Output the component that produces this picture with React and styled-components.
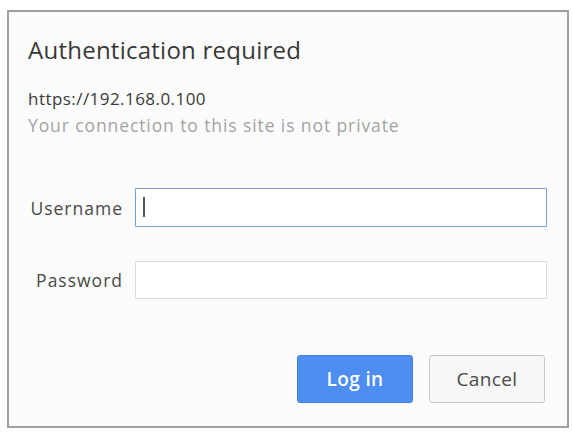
import React from "react";
import styled, { createGlobalStyle } from "styled-components";

const GlobalStyle = createGlobalStyle`
  html, body {
    margin: 0;
    padding: 0;
    background: #ffffff;
  }
  body {
    font-family: "Open Sans", "Noto Sans", Arial, sans-serif;
  }
`;

const Page = styled.div`
  padding: 10px 4px 6px 7px;
  width: 573px;
  height: 434px;
  box-sizing: border-box;
`;

const Dialog = styled.div`
  width: 562px;
  height: 418px;
  box-sizing: border-box;
  border: 2px solid #a0a0a0;
  background: #fcfcfc;
  padding: 24px 20px 23px 19px;
  display: flex;
  flex-direction: column;
`;

const Title = styled.h1`
  margin: 0;
  font-size: 24px;
  line-height: 28px;
  letter-spacing: 0.25px;
  font-weight: 400;
  color: #383838;
`;

const Origin = styled.div`
  margin-top: 25px;
  font-size: 17px;
  line-height: 20px;
  letter-spacing: 0.45px;
  color: #3a3a3a;
`;

const Notice = styled.div`
  margin-top: 5px;
  font-size: 17.5px;
  line-height: 22px;
  letter-spacing: 0.9px;
  color: #a3a3a3;
`;

const Form = styled.div`
  margin-top: 52px;
  display: grid;
  grid-template-columns: 94px 1fr;
  column-gap: 13px;
  row-gap: 34px;
  align-items: center;
`;

const Label = styled.label`
  text-align: right;
  font-size: 17.5px;
  letter-spacing: 1px;
  margin-right: -1px;
  color: #484848;
`;

const Field = styled.div`
  position: relative;
  height: ${(p) => (p.$focused ? 39 : 38)}px;
  box-sizing: border-box;
  border: 1px solid ${(p) => (p.$focused ? "#7d9fe0" : "#dcdcdc")};
  box-shadow: ${(p) => (p.$focused ? "0 0 1px #a8c0ee" : "none")};
  background: #fff;
  border-radius: 1px;
`;

const Caret = styled.span`
  position: absolute;
  left: 7px;
  top: 8px;
  width: 2px;
  height: 20px;
  background: #555;
`;

const Actions = styled.div`
  margin-top: 56px;
  display: flex;
  justify-content: flex-end;
  gap: 16px;
  padding-right: 2px;
`;

const Button = styled.button`
  width: 116px;
  height: 48px;
  border-radius: 3px;
  font-family: inherit;
  font-size: 19px;
  letter-spacing: 0.4px;
  font-weight: ${(p) => (p.$primary ? 600 : 400)};
  color: ${(p) => (p.$primary ? "#fff" : "#4a4a4a")};
  background: ${(p) => (p.$primary ? "#4d8ef0" : "#f7f7f7")};
  border: 1px solid ${(p) => (p.$primary ? "#3f80e4" : "#c8c8c8")};
  cursor: pointer;
`;

export default function App() {
  return (
    <>
      <GlobalStyle />
      <Page>
        <Dialog>
          <Title>Authentication required</Title>
          <Origin>https://192.168.0.100</Origin>
          <Notice>Your connection to this site is not private</Notice>
          <Form>
            <Label>Username</Label>
            <Field $focused>
              <Caret />
            </Field>
            <Label>Password</Label>
            <Field />
          </Form>
          <Actions>
            <Button $primary>Log in</Button>
            <Button>Cancel</Button>
          </Actions>
        </Dialog>
      </Page>
    </>
  );
}
